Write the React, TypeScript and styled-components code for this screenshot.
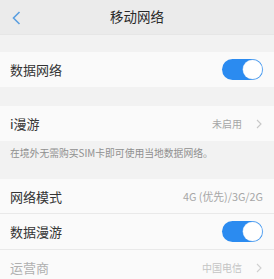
import React from "react";
import styled, { createGlobalStyle } from "styled-components";

const Global = createGlobalStyle`
  html, body { margin: 0; padding: 0; background: #f2f2f2; }
  body { font-family: "Noto Sans CJK SC", "Noto Sans", sans-serif; overflow: hidden; }
  * { box-sizing: border-box; }
`;

const Page = styled.div`
  width: 274px;
  height: 279px;
  background: #f2f2f2;
  display: flex;
  flex-direction: column;
  overflow: hidden;
`;

const Header = styled.div`
  height: 35px;
  flex: none;
  background: #ebebeb;
  display: flex;
  align-items: center;
  justify-content: center;
  position: relative;
  border-bottom: 1px solid #e6e6e6;
`;

const Back = styled.div`
  position: absolute;
  left: 11px;
  top: 11px;
  width: 12px;
  height: 14px;
  display: flex;
`;

const Title = styled.div`
  font-size: 13.5px;
  color: #2a2a2a;
  line-height: 1;
`;

const Gap = styled.div<{ h: number }>`
  height: ${(p) => p.h}px;
  flex: none;
`;

const Row = styled.div<{ h?: number; divider?: boolean }>`
  height: ${(p) => p.h ?? 35}px;
  flex: none;
  background: #fafafa;
  display: flex;
  align-items: center;
  justify-content: space-between;
  padding: 0 11px 0 10px;
  border-bottom: ${(p) => (p.divider ? "1px solid #e9e9e9" : "none")};
`;

const Label = styled.div<{ muted?: boolean }>`
  font-size: 13px;
  color: ${(p) => (p.muted ? "#b0b0b0" : "#333")};
  line-height: 1;
`;

const Right = styled.div`
  display: flex;
  align-items: center;
  gap: 14px;
  padding-right: 1px;
`;

const Value = styled.div<{ faint?: boolean; size?: number }>`
  font-size: ${(p) => p.size ?? 10}px;
  color: ${(p) => (p.faint ? "#c4c4c4" : "#a6a6a6")};
  line-height: 1;
`;

const Note = styled.div`
  font-size: 9.8px;
  color: #8f8f8f;
  padding: 5px 10px 0;
  height: 38px;
  flex: none;
  line-height: 14px;
  white-space: nowrap;
`;

const Track = styled.div`
  width: 41px;
  height: 21px;
  border-radius: 11px;
  background: #2b8bf0;
  display: flex;
  align-items: center;
  justify-content: flex-end;
  padding: 1px;
`;

const Knob = styled.div`
  width: 19px;
  height: 19px;
  border-radius: 50%;
  background: #fff;
  box-shadow: 0 0 0 0.5px #9cc6f2;
`;

const Chevron = ({ color = "#c8c8c8" }: { color?: string }) => (
  <svg width="6" height="10" viewBox="0 0 6 10">
    <path d="M1 1 L5 5 L1 9" fill="none" stroke={color} strokeWidth="1.1" />
  </svg>
);

const Toggle = () => (
  <Track>
    <Knob />
  </Track>
);

export default function App() {
  return (
    <Page>
      <Global />
      <Header>
        <Back>
          <svg width="12" height="14" viewBox="0 0 12 14">
            <path d="M8.5 1 L2.5 7 L8.5 13" fill="none" stroke="#5b9fe0" strokeWidth="1.6" />
          </svg>
        </Back>
        <Title>移动网络</Title>
      </Header>
      <Gap h={17} />
      <Row>
        <Label>数据网络</Label>
        <Toggle />
      </Row>
      <Gap h={19} />
      <Row>
        <Label>i漫游</Label>
        <Right>
          <Value>未启用</Value>
          <Chevron />
        </Right>
      </Row>
      <Note>在境外无需购买SIM卡即可使用当地数据网络。</Note>
      <Row divider>
        <Label>网络模式</Label>
        <Value size={10.8}>4G (优先)/3G/2G</Value>
      </Row>
      <Row h={36} divider>
        <Label>数据漫游</Label>
        <Toggle />
      </Row>
      <Row>
        <Label muted>运营商</Label>
        <Right>
          <Value faint>中国电信</Value>
          <Chevron color="#d0d0d0" />
        </Right>
      </Row>
    </Page>
  );
}
